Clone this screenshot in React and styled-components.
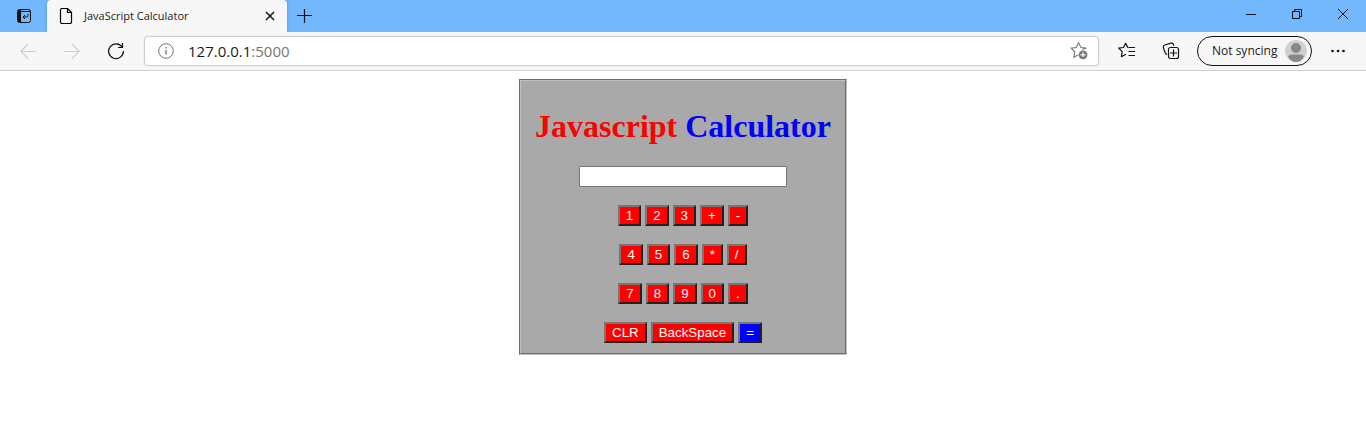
import React, { useState } from "react";
import styled, { createGlobalStyle } from "styled-components";

const GlobalStyle = createGlobalStyle`
  * { box-sizing: border-box; }
  body {
    margin: 0;
    background: #fff;
    font-family: "Liberation Serif", "Times New Roman", serif;
  }
`;

const uiFont = `"Segoe UI", "Open Sans", sans-serif`;

const TitleBar = styled.header`
  display: flex;
  align-items: stretch;
  height: 32px;
  background: #73b7fc;
`;

const IconButton = styled.button`
  display: flex;
  flex: none;
  align-items: center;
  justify-content: center;
  width: ${(p) => p.$width || 44}px;
  height: ${(p) => p.$height || 32}px;
  padding: 0;
  border: 0;
  background: transparent;
  color: ${(p) => (p.disabled ? "#cbcbcb" : "#111")};
`;

const Tab = styled.div`
  display: flex;
  align-items: center;
  width: 240px;
  padding: 0 5px 0 11px;
  border-radius: 4px 4px 0 0;
  background: #f7f7f7;
  box-shadow: 0 0 3px rgba(0, 60, 120, 0.3);
  clip-path: inset(0 -3px 0 -3px);
`;

const TabTitle = styled.span`
  flex: 1;
  margin-left: 10px;
  color: #1b1b1b;
  font: 11px/16px ${uiFont};
  white-space: nowrap;
`;

const WindowControls = styled.div`
  display: flex;
  margin-left: auto;
`;

const Toolbar = styled.nav`
  display: flex;
  align-items: center;
  height: 39px;
  padding: 0 6px;
  border-bottom: 1px solid #d0d0d0;
  background: #f7f7f7;
`;

const AddressBar = styled.div`
  display: flex;
  flex: 1;
  align-items: center;
  height: 30px;
  margin: 0 6px;
  padding: 0 10px 0 13px;
  border: 1px solid #cfcfcf;
  border-radius: 4px;
  background: #fff;
  box-shadow: 0 0 2px rgba(0, 0, 0, 0.12);
`;

const Url = styled.span`
  flex: 1;
  margin-left: 14px;
  color: #1b1b1b;
  font: 15px/20px ${uiFont};
`;

const Port = styled.span`
  color: #767676;
`;

const Profile = styled.button`
  display: flex;
  flex: none;
  align-items: center;
  justify-content: space-between;
  width: 115px;
  height: 30px;
  margin: 0 4px;
  padding: 0 4px 0 14px;
  border: 1px solid #111;
  border-radius: 15px;
  background: #f7f7f7;
  color: #1b1b1b;
  font: 12px/16px ${uiFont};
  white-space: nowrap;
`;

const Page = styled.main`
  display: flex;
  justify-content: center;
  padding: 8px;
`;

const Calculator = styled.form`
  display: flex;
  flex-direction: column;
  align-items: center;
  gap: 18px;
  padding: 27px 14px 10px;
  border: 2px groove #c0c0c0;
  background: #a9a9a9;
`;

const Heading = styled.h1`
  margin: 0 0 3px;
  color: #f00;
  font-size: 32px;
  line-height: 37px;
  white-space: nowrap;
`;

const Accent = styled.span`
  color: #00f;
`;

const Display = styled.input`
  width: 208px;
  height: 21px;
  padding: 1px 2px;
  border: 1px solid #767676;
  border-radius: 1px;
  background: #fff;
  font-family: "Liberation Sans", Arial, sans-serif;
`;

const KeyRow = styled.div`
  display: flex;
  gap: 4px;
`;

const Key = styled.button`
  height: 21px;
  padding: 1px 6px;
  border: 2px solid;
  border-color: #767676 #212121 #212121 #767676;
  background: ${(p) => (p.$equals ? "#00f" : "#f00")};
  color: #fff;
  font-family: "Liberation Sans", Arial, sans-serif;
`;

const Icon = ({ size = 16, stroke = 1, children }) => (
  <svg
    width={size}
    height={size}
    viewBox={`0 0 ${size} ${size}`}
    fill="none"
    stroke="currentColor"
    strokeWidth={stroke}
    aria-hidden="true"
  >
    {children}
  </svg>
);

const TabActionsIcon = () => (
  <Icon>
    <rect x="1.5" y="1.5" width="13" height="13" rx="2" />
    <path d="M2 3.5h12" />
    <path d="M2 2h3v12H2z" fill="currentColor" stroke="none" />
    <path d="M12 6v1.500q0 1.500-1.500 1.500H7M9 7L7 9l2 2" />
  </Icon>
);

const PageIcon = () => (
  <Icon>
    <path d="M4 .5h5.500l4 4V14q0 1.500-1.500 1.500H4q-1.500 0-1.500-1.500V2Q2.500.5 4 .5z" strokeWidth="1.2" />
    <path d="M9.500.5v4h4" strokeWidth="1.2" />
  </Icon>
);

const TabCloseIcon = () => (
  <Icon stroke={1.5}>
    <path d="M4 4l8 8M12 4l-8 8" />
  </Icon>
);

const PlusIcon = () => (
  <Icon stroke={1.2}>
    <path d="M8.5 1v14M1 7.5h15" />
  </Icon>
);

const BackIcon = () => (
  <Icon stroke={1.1}>
    <path d="M16 8.500H1M8 1L.8 8.300 8 15.500" />
  </Icon>
);

const ForwardIcon = () => (
  <Icon stroke={1.1}>
    <path d="M0 8.500h15M8 1l7.200 7.300L8 15.500" />
  </Icon>
);

const ReloadIcon = () => (
  <Icon size={18} stroke={1.2}>
    <path d="M15.300 5.300A7.400 7.400 0 1 0 16.400 9" />
    <path d="M15.500 1v4.500H11" />
  </Icon>
);

const InfoIcon = () => (
  <Icon>
    <circle cx="8" cy="8" r="7.3" stroke="#767676" />
    <path d="M8 7v4.500M8 4v1.500" stroke="#767676" strokeWidth="1.4" />
  </Icon>
);

const AddFavoriteIcon = () => (
  <Icon size={18}>
    <g stroke="#767676" strokeWidth="1.1">
      <path d="M12.500 7.500l3.800-1.400-5.300-.6-2.500-4.700-2.300 4.700-5 .7 3.600 3.600-1 5.400L8 13" />
      <circle cx="13" cy="12.8" r="4.400" fill="#767676" stroke="none" />
      <path d="M13 10.300v5M10.500 12.800h5" stroke="#fff" strokeWidth="1.2" />
    </g>
  </Icon>
);

const FavoritesIcon = () => (
  <Icon size={18} stroke={1.2}>
    <path d="M10.500 5.500H9.800L7.700 1.200 5.500 5.500l-4.800.7 3.500 3.500-.8 5L8 12.300" strokeLinejoin="round" />
    <path d="M10.500 5.500H17M10.500 9.500H17M10.500 13.500H17" />
  </Icon>
);

const CollectionsIcon = () => (
  <Icon size={18} stroke={1.2}>
    <path d="M5 12.500Q3.600 12 3 10.500L1.400 5.600Q.9 3.700 2.800 3L9 1.200q1.900-.5 2.500 1.300l.4 1.300" />
    <rect x="6.5" y="5.5" width="10" height="11" rx="2" />
    <path d="M11.500 7.500v7M8 11h7" />
  </Icon>
);

const MoreIcon = () => (
  <Icon>
    <g fill="currentColor" stroke="none">
      <circle cx="2.5" cy="8" r="1.3" />
      <circle cx="8" cy="8" r="1.3" />
      <circle cx="13.5" cy="8" r="1.3" />
    </g>
  </Icon>
);

const Avatar = () => (
  <svg width="22" height="22" viewBox="0 0 22 22" aria-hidden="true">
    <circle cx="11" cy="11" r="11" fill="#d2d0ce" />
    <circle cx="11" cy="8" r="5" fill="#8a8886" />
    <path d="M3 16.500Q4 14.500 6.500 14.500h9q2.500 0 3.500 2Q16 22 11 22T3 16.500z" fill="#8a8886" />
  </svg>
);

const MinimizeIcon = () => (
  <Icon size={10}>
    <path d="M0 5.500h10" />
  </Icon>
);

const RestoreIcon = () => (
  <Icon size={10}>
    <path d="M.5 2.500h7v7h-7zM2.500 2.500v-2h7v7h-2" />
  </Icon>
);

const CloseIcon = () => (
  <Icon size={10}>
    <path d="M0 0l10 10M10 0L0 10" />
  </Icon>
);

const rows = [
  ["1", "2", "3", "+", "-"],
  ["4", "5", "6", "*", "/"],
  ["7", "8", "9", "0", "."],
  ["CLR", "BackSpace", "="],
];

function evaluate(text) {
  const tokens = text.match(/\d*\.?\d+|[-+*/]/g);
  if (!tokens) return "";
  const terms = [];
  let sign = 1;
  let op = null;
  for (const token of tokens) {
    const value = Number(token);
    if (Number.isNaN(value)) {
      if (token === "-" && (op === "*" || op === "/")) {
        sign = -sign;
      } else {
        op = token;
        sign = token === "-" ? -1 : 1;
      }
    } else {
      if (op === "*") terms.push((terms.pop() || 0) * value * sign);
      else if (op === "/") terms.push((terms.pop() || 0) / (value * sign));
      else terms.push(sign * value);
      sign = 1;
      op = null;
    }
  }
  return String(terms.reduce((sum, term) => sum + term, 0));
}

export default function App() {
  const [value, setValue] = useState("");

  const press = (key) => {
    if (key === "CLR") setValue("");
    else if (key === "BackSpace") setValue(value.slice(0, -1));
    else if (key === "=") setValue(evaluate(value));
    else setValue(value + key);
  };

  return (
    <>
      <GlobalStyle />
      <TitleBar>
        <IconButton $width={47} aria-label="Tab actions"><TabActionsIcon /></IconButton>
        <Tab>
          <PageIcon />
          <TabTitle>JavaScript Calculator</TabTitle>
          <IconButton $width={24} $height={24} aria-label="Close tab"><TabCloseIcon /></IconButton>
        </Tab>
        <IconButton $width={34} aria-label="New tab"><PlusIcon /></IconButton>
        <WindowControls>
          <IconButton $width={46} $height={28} aria-label="Minimize"><MinimizeIcon /></IconButton>
          <IconButton $width={46} $height={28} aria-label="Restore"><RestoreIcon /></IconButton>
          <IconButton $width={46} $height={28} aria-label="Close"><CloseIcon /></IconButton>
        </WindowControls>
      </TitleBar>
      <Toolbar>
        <IconButton disabled aria-label="Back"><BackIcon /></IconButton>
        <IconButton disabled aria-label="Forward"><ForwardIcon /></IconButton>
        <IconButton aria-label="Reload"><ReloadIcon /></IconButton>
        <AddressBar>
          <InfoIcon />
          <Url>127.0.0.1<Port>:5000</Port></Url>
          <IconButton $width={18} $height={24} aria-label="Add to favorites"><AddFavoriteIcon /></IconButton>
        </AddressBar>
        <IconButton aria-label="Favorites"><FavoritesIcon /></IconButton>
        <IconButton aria-label="Collections"><CollectionsIcon /></IconButton>
        <Profile>Not syncing<Avatar /></Profile>
        <IconButton aria-label="More"><MoreIcon /></IconButton>
      </Toolbar>
      <Page>
        <Calculator onSubmit={(e) => e.preventDefault()}>
          <Heading>Javascript <Accent>Calculator</Accent></Heading>
          <Display aria-label="Expression" value={value} onChange={(e) => setValue(e.target.value)} />
          {rows.map((keys) => (
            <KeyRow key={keys[0]}>
              {keys.map((key) => (
                <Key key={key} type="button" $equals={key === "="} onClick={() => press(key)}>{key}</Key>
              ))}
            </KeyRow>
          ))}
        </Calculator>
      </Page>
    </>
  );
}
